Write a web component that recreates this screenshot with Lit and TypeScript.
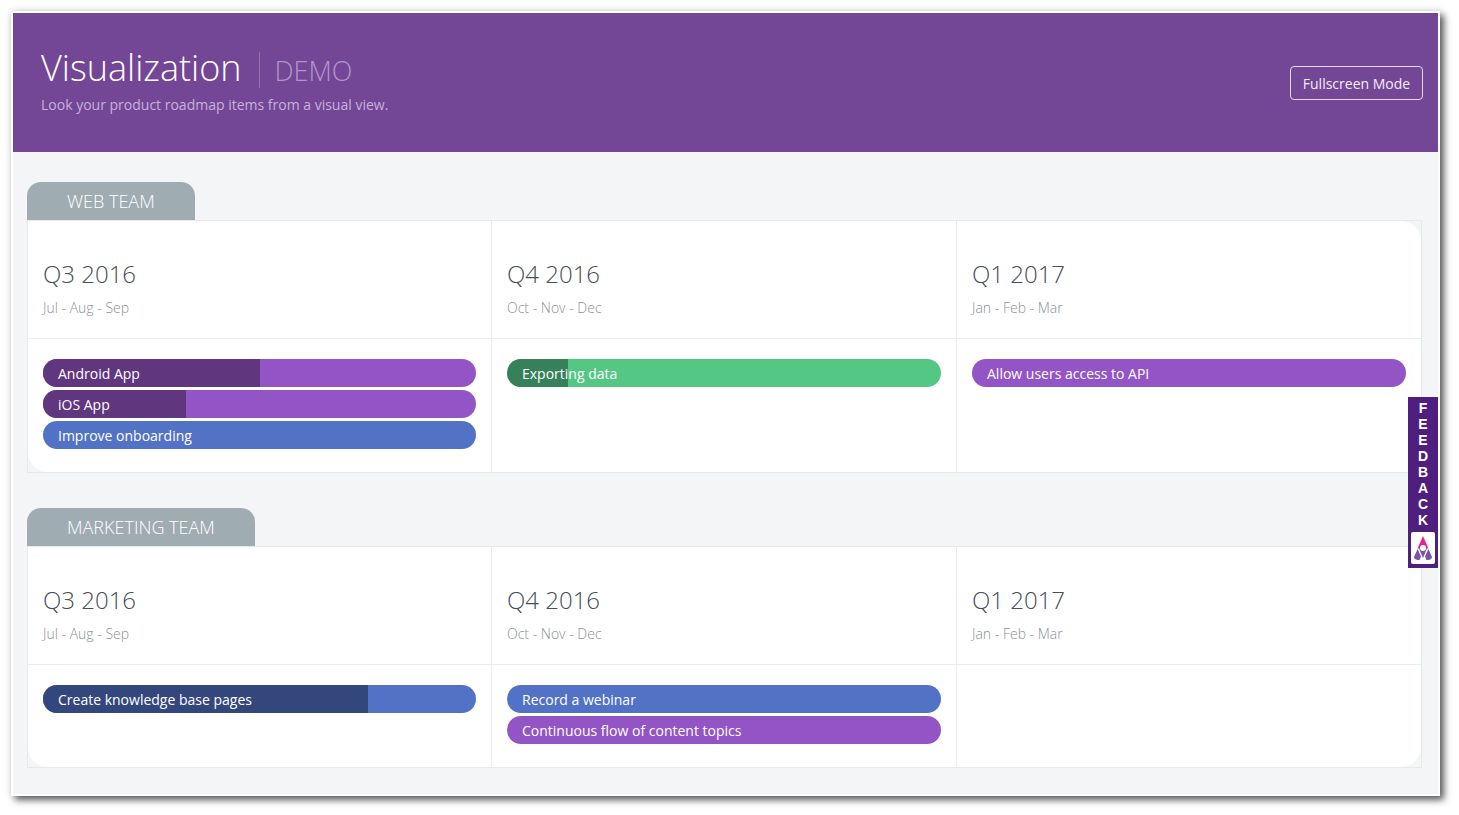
import { LitElement, html, css } from "lit";
import { customElement } from "lit/decorators.js";

type Bar = { label: string; color: string; dark: string; pct: number };
const P = ["#9355c5", "#60367f"];
const B = ["#5272c6", "#34477d"];
const G = ["#55c785", "#36805a"];
const bar = (label: string, c: string[], pct = 0): Bar => ({ label, color: c[0], dark: c[1], pct });

const quarters = [
  ["Q3 2016", "Jul - Aug - Sep"],
  ["Q4 2016", "Oct - Nov - Dec"],
  ["Q1 2017", "Jan - Feb - Mar"],
];

const teams: { name: string; cls: string; cols: Bar[][] }[] = [
  {
    name: "WEB TEAM",
    cls: "web",
    cols: [
      [bar("Android App", P, 50), bar("iOS App", P, 33), bar("Improve onboarding", B)],
      [bar("Exporting data", G, 14)],
      [bar("Allow users access to API", P)],
    ],
  },
  {
    name: "MARKETING TEAM",
    cls: "mkt",
    cols: [
      [bar("Create knowledge base pages", B, 75)],
      [bar("Record a webinar", B), bar("Continuous flow of content topics", P)],
      [],
    ],
  },
];

@customElement("app-root")
export class AppRoot extends LitElement {
  static styles = css`
    :host {
      display: block;
      height: 815px;
      padding: 11px 19px 19px 11px;
      box-sizing: border-box;
      background: #fff;
      font-family: "Open Sans", sans-serif;
      overflow: hidden;
    }
    .frame {
      position: relative;
      height: 785px;
      border: 2px solid #fff;
      box-sizing: border-box;
      background: #f3f5f7;
      box-shadow: 4px 4px 7px rgba(0, 0, 0, 0.62), 0 0 8px rgba(0, 0, 0, 0.12);
    }
    header {
      height: 139px;
      background: #744696;
      display: flex;
      align-items: flex-start;
      justify-content: space-between;
      padding: 0 15px 0 28px;
      box-sizing: border-box;
    }
    .titles { display: flex; align-items: flex-start; flex-direction: column; }
    .top { display: flex; align-items: center; margin-top: 39px; height: 36px; }
    h1 {
      margin: -5px 0 0;
      font-size: 36px;
      line-height: 36px;
      font-weight: 300;
      color: #fff;
    }
    .demo {
      margin-left: 17px;
      padding-left: 15px;
      border-left: 1px solid #9473ae;
      font-size: 27px;
      font-weight: 300;
      line-height: 36px;
      color: #b096c8;
    }
    .demo span { position: relative; top: 1px; }
    .sub { margin-top: 7px; font-size: 14px; line-height: 20px; color: #c8b1da; }
    button {
      margin-top: 53px;
      width: 133px;
      height: 34px;
      border: 1px solid #e3d9ea;
      border-radius: 4px;
      background: transparent;
      color: #f3edf7;
      font: 14px/20px "Open Sans", sans-serif;
      padding: 2px 0 0;
    }
    main { padding: 30px 16px 0 14px; }
    .team { margin-bottom: 35px; }
    .tab {
      display: inline-block;
      height: 38px;
      line-height: 39px;
      padding: 0 40px;
      background: #9fadb3;
      border-radius: 14px 14px 0 0;
      color: #fff;
      font-size: 18px;
      font-weight: 300;
      vertical-align: top;
    }
    .tabrow { height: 38px; }
    .table {
      display: grid;
      grid-template-columns: 464px 465px 1fr;
      border: 1px solid #e4e9ea;
      background: #f3f5f7;
    }
    .cell { background: #fff; border-right: 1px solid #e9ecee; box-sizing: border-box; }
    .cell:nth-child(3n) { border-right: 0; }
    .head { height: 118px; padding: 37px 15px 0; border-bottom: 1px solid #e9ecee; }
    .q { font-size: 24px; font-weight: 300; line-height: 32px; color: #474e57; }
    .m { margin-top: 8px; font-size: 14px; font-weight: 300; line-height: 20px; color: #8b9196; }
    .body { padding: 20px 15px 0; display: flex; flex-direction: column; gap: 3px; }
    .web .body { height: 133px; }
    .mkt .body { height: 102px; }
    .web .head.c3 { border-top-right-radius: 20px; }
    .web .body.c1 { border-bottom-left-radius: 20px; }
    .mkt .body.c1 { border-bottom-left-radius: 20px; }
    .mkt .body.c3 { border-bottom-right-radius: 20px; }
    .bar {
      position: relative;
      height: 28px;
      border-radius: 14px;
      overflow: hidden;
      flex: none;
    }
    .fill { position: absolute; left: 0; top: 0; bottom: 0; }
    .lbl {
      position: relative;
      display: block;
      padding-left: 15px;
      font-size: 14px;
      line-height: 29px;
      color: #fff;
      white-space: nowrap;
    }
    .fb {
      position: absolute;
      right: 0;
      top: 384px;
      width: 30px;
      height: 171px;
      background: #4e1f7f;
      box-sizing: border-box;
      display: flex;
      flex-direction: column;
      align-items: center;
      padding-top: 3px;
    }
    .fb b {
      display: block;
      font: bold 14px/16px "Liberation Sans", Arial, sans-serif;
      color: #fff;
      height: 16px;
    }
    .logo {
      margin-top: 4px;
      width: 24px;
      height: 32px;
      background: #fff;
      border-radius: 2px;
      display: flex;
      align-items: center;
      justify-content: center;
    }
  `;

  private renderBar(b: Bar) {
    return html`<div class="bar" style="background:${b.color}">
      ${b.pct ? html`<div class="fill" style="width:${b.pct}%;background:${b.dark}"></div>` : ""}
      <span class="lbl">${b.label}</span>
    </div>`;
  }

  render() {
    return html`<div class="frame">
      <header>
        <div class="titles">
          <div class="top"><h1>Visualization</h1><div class="demo"><span>DEMO</span></div></div>
          <div class="sub">Look your product roadmap items from a visual view.</div>
        </div>
        <button>Fullscreen Mode</button>
      </header>
      <main>
        ${teams.map(
          (t) => html`<section class="team ${t.cls}">
            <div class="tabrow"><div class="tab">${t.name}</div></div>
            <div class="table">
              ${quarters.map(
                (q, i) => html`<div class="cell head c${i + 1}">
                  <div class="q">${q[0]}</div>
                  <div class="m">${q[1]}</div>
                </div>`
              )}
              ${t.cols.map(
                (c, i) => html`<div class="cell body c${i + 1}">${c.map((b) => this.renderBar(b))}</div>`
              )}
            </div>
          </section>`
        )}
      </main>
      <aside class="fb">
        ${"FEEDBACK".split("").map((l) => html`<b>${l}</b>`)}
        <div class="logo">
          <svg width="20" height="28" viewBox="0 0 20 28">
            <path d="M10 2 L15.5 14.5 H4.5 Z" fill="#e0288c" />
            <path d="M6 14.5 H14 L10 24 Z" fill="#7b52a8" />
            <circle cx="10" cy="14" r="3" fill="#fff" />
            <path d="M4.6 15 L1 23 Q1.5 26.5 6.5 26 L8 22.5 Z M15.4 15 L19 23 Q18.5 26.5 13.5 26 L12 22.5 Z" fill="#7b52a8" />
          </svg>
        </div>
      </aside>
    </div>`;
  }
}
